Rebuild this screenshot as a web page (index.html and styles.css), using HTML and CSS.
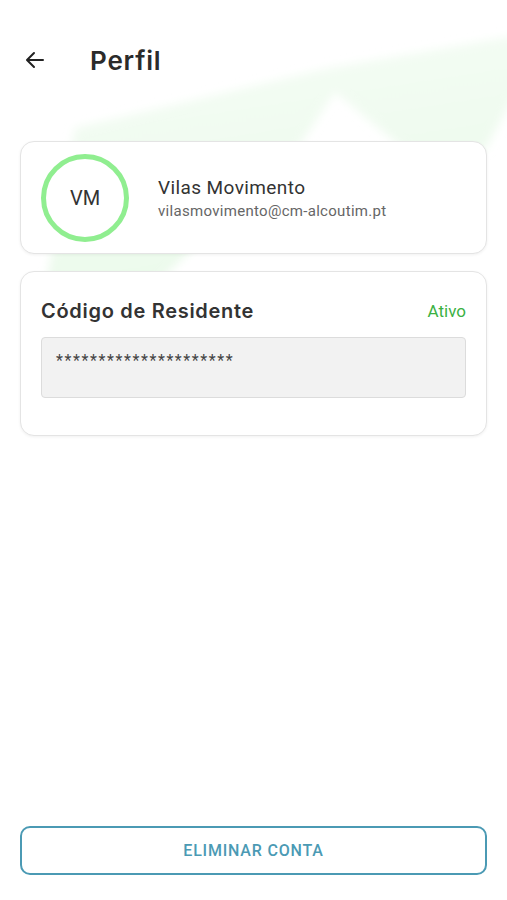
FILE: index.html
```html
<!DOCTYPE html>
<html lang="pt">

<head>
  <meta charset="UTF-8">
  <meta name="viewport" content="width=device-width, initial-scale=1.0">
  <title>Perfil</title>
  <link rel="stylesheet" href="styles.css">
</head>

<body>
  <!--fundo decorativo-->
  <svg class="bg-mark" width="507" height="900" viewBox="0 0 507 900">
    <defs>
      <filter id="soft" x="-20%" y="-20%" width="140%" height="140%">
        <feGaussianBlur stdDeviation="5" />
      </filter>
      <linearGradient id="fade" x1="0" y1="0" x2="0.3" y2="1">
        <stop offset="0" stop-color="#f6fdf6" />
        <stop offset="1" stop-color="#ebfaeb" />
      </linearGradient>
    </defs>
    <polygon points="45,290 150,290 300,145 335,92 405,150 485,150 550,30 330,68 75,128" fill="url(#fade)" filter="url(#soft)" />
  </svg>

  <main class="page">
    <header class="top-bar">
      <a class="back-btn" href="#">
        <svg width="24" height="24" viewBox="0 0 24 24">
          <path d="M20 12H4.5M11 5l-7 7 7 7" fill="none" stroke="#222" stroke-width="2" stroke-linecap="round" stroke-linejoin="round" />
        </svg>
      </a>
      <h1 class="title">Perfil</h1>
    </header>

    <section class="card user-card">
      <div class="avatar">VM</div>
      <div class="user-info">
        <p class="user-name">Vilas Movimento</p>
        <p class="user-email">vilasmovimento@cm-alcoutim.pt</p>
      </div>
    </section>

    <section class="card code-card">
      <div class="code-head">
        <h2 class="code-title">Código de Residente</h2>
        <span class="status">Ativo</span>
      </div>
      <div class="code-box">*********************</div>
    </section>

    <button class="delete-btn" type="button">ELIMINAR CONTA</button>
  </main>
</body>

</html>
```

FILE: styles.css
```css
*{margin: 0; padding: 0; box-sizing: border-box;}
a{text-decoration: 0;}
body{
  background-color: #fff;
  font-family: Roboto, "Liberation Sans", sans-serif;
  color: #333;
  position: relative;
  overflow: hidden;
}

.bg-mark{
  position: absolute;
  top: 0;
  left: 0;
  z-index: 0;
}

.page{
  position: relative;
  z-index: 1;
  min-height: 100vh;
  display: flex;
  flex-direction: column;
  padding: 0 20px 25px;
}

/*상단*/
.top-bar{
  height: 120px;
  display: flex;
  align-items: center;
}
.back-btn{
  display: flex;
  width: 24px;
  height: 24px;
  margin-left: 3px;
}
.title{
  margin-left: 43px;
  font-family: Inter, "Noto Sans", sans-serif;
  font-size: 26px;
  font-weight: 600;
  letter-spacing: .8px;
  color: #2b2b2b;
}

/*카드*/
.card{
  background: #fff;
  border: 1px solid #e4e4e4;
  border-radius: 14px;
  box-shadow: 0 1px 3px rgba(0,0,0,.06);
}
.user-card{
  margin-top: 21px;
  height: 113px;
  display: flex;
  align-items: center;
  padding-left: 20px;
}
.avatar{
  width: 88px;
  height: 88px;
  border: 5px solid #90ee90;
  border-radius: 50%;
  display: flex;
  align-items: center;
  justify-content: center;
  font-size: 20px;
  color: #333;
}
.user-info{
  margin-left: 29px;
}
.user-name{
  font-size: 19px;
  letter-spacing: .4px;
  color: #333;
}
.user-email{
  margin-top: 3px;
  font-size: 15px;
  letter-spacing: .3px;
  color: #666;
}

.code-card{
  margin-top: 17px;
  height: 165px;
  padding: 27px 20px 0;
}
.code-head{
  display: flex;
  justify-content: space-between;
  align-items: center;
}
.code-title{
  font-family: Inter, "Noto Sans", sans-serif;
  font-size: 20px;
  font-weight: 600;
  letter-spacing: .7px;
  color: #333;
}
.status{
  font-size: 17px;
  color: #3bb143;
}
.code-box{
  margin-top: 14px;
  height: 61px;
  background: #f2f2f2;
  border: 1px solid #dcdcdc;
  border-radius: 4px;
  padding: 13px 14px 0;
  font-size: 16px;
  letter-spacing: 1.6px;
  color: #444;
}

/*버튼*/
.delete-btn{
  margin-top: auto;
  height: 49px;
  background: #fff;
  border: 2px solid #4b9ab4;
  border-radius: 10px;
  font-family: Roboto, "Liberation Sans", sans-serif;
  font-size: 16px;
  font-weight: 500;
  letter-spacing: .8px;
  color: #4b9ab4;
}
```
